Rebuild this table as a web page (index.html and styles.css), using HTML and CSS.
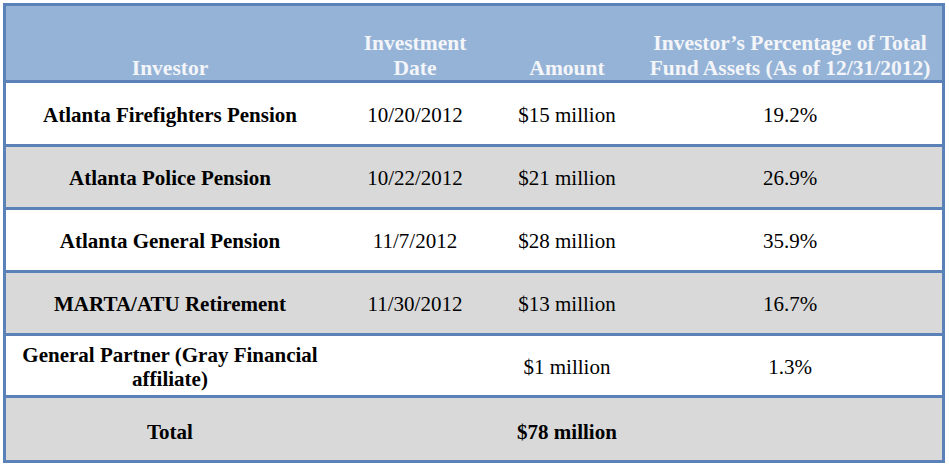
FILE: index.html
```html
<!DOCTYPE html>
<html>
<head>
<meta charset="utf-8">
<link rel="stylesheet" href="styles.css">
</head>
<body>
<table class="fund">
  <colgroup>
    <col class="c-inv">
    <col class="c-date">
    <col class="c-amt">
    <col class="c-pct">
  </colgroup>
  <thead>
    <tr class="head">
      <th><span class="hd">Investor</span></th>
      <th><span class="hd">Investment<br>Date</span></th>
      <th><span class="hd">Amount</span></th>
      <th><span class="hd">Investor’s Percentage of Total<br>Fund Assets (As of 12/31/2012)</span></th>
    </tr>
  </thead>
  <tbody>
    <tr class="row r1">
      <td class="name">Atlanta Firefighters Pension</td>
      <td>10/20/2012</td>
      <td>$15 million</td>
      <td>19.2%</td>
    </tr>
    <tr class="row alt">
      <td class="name">Atlanta Police Pension</td>
      <td>10/22/2012</td>
      <td>$21 million</td>
      <td>26.9%</td>
    </tr>
    <tr class="row">
      <td class="name">Atlanta General Pension</td>
      <td>11/7/2012</td>
      <td>$28 million</td>
      <td>35.9%</td>
    </tr>
    <tr class="row alt">
      <td class="name">MARTA/ATU Retirement</td>
      <td>11/30/2012</td>
      <td>$13 million</td>
      <td>16.7%</td>
    </tr>
    <tr class="row r5">
      <td class="name">General Partner (Gray Financial affiliate)</td>
      <td></td>
      <td>$1 million</td>
      <td>1.3%</td>
    </tr>
    <tr class="row alt total">
      <td class="name">Total</td>
      <td></td>
      <td class="strong">$78 million</td>
      <td></td>
    </tr>
  </tbody>
</table>
</body>
</html>
```

FILE: styles.css
```css
html, body {
  margin: 0;
  padding: 0;
  background: #ffffff;
}

.fund {
  margin: 3px;
  width: 942px;
  table-layout: fixed;
  border-collapse: separate;
  border-spacing: 0;
  border: 3px solid #5a82b8;
  font-family: "Liberation Serif", "Times New Roman", serif;
  font-size: 21px;
  line-height: 24px;
  color: #000;
}

.c-inv { width: 328px; }
.c-date { width: 162px; }
.c-amt { width: 142px; }
.c-pct { width: 304px; }

.head th {
  background: #95b3d7;
  color: #f3f5f9;
  font-weight: bold;
  font-size: 21.5px;
  line-height: 25px;
  text-align: center;
  vertical-align: bottom;
  height: 74px;
  padding: 0 2px 0;
  box-sizing: border-box;
}

.hd {
  display: block;
  margin-bottom: -1px;
}

.row td {
  border-top: 3px solid #5a82b8;
  background: #ffffff;
  text-align: center;
  vertical-align: middle;
  height: 63px;
  box-sizing: border-box;
  padding: 2px 10px 0 10px;
}

.row.alt td {
  background: #d9d9d9;
}

.row.r1 td { height: 64px; }
.row.r5 td { height: 62px; }
.row.total td { height: 65px; padding-top: 5px; }

.row td.name,
.row td.strong {
  font-weight: bold;
}
```
